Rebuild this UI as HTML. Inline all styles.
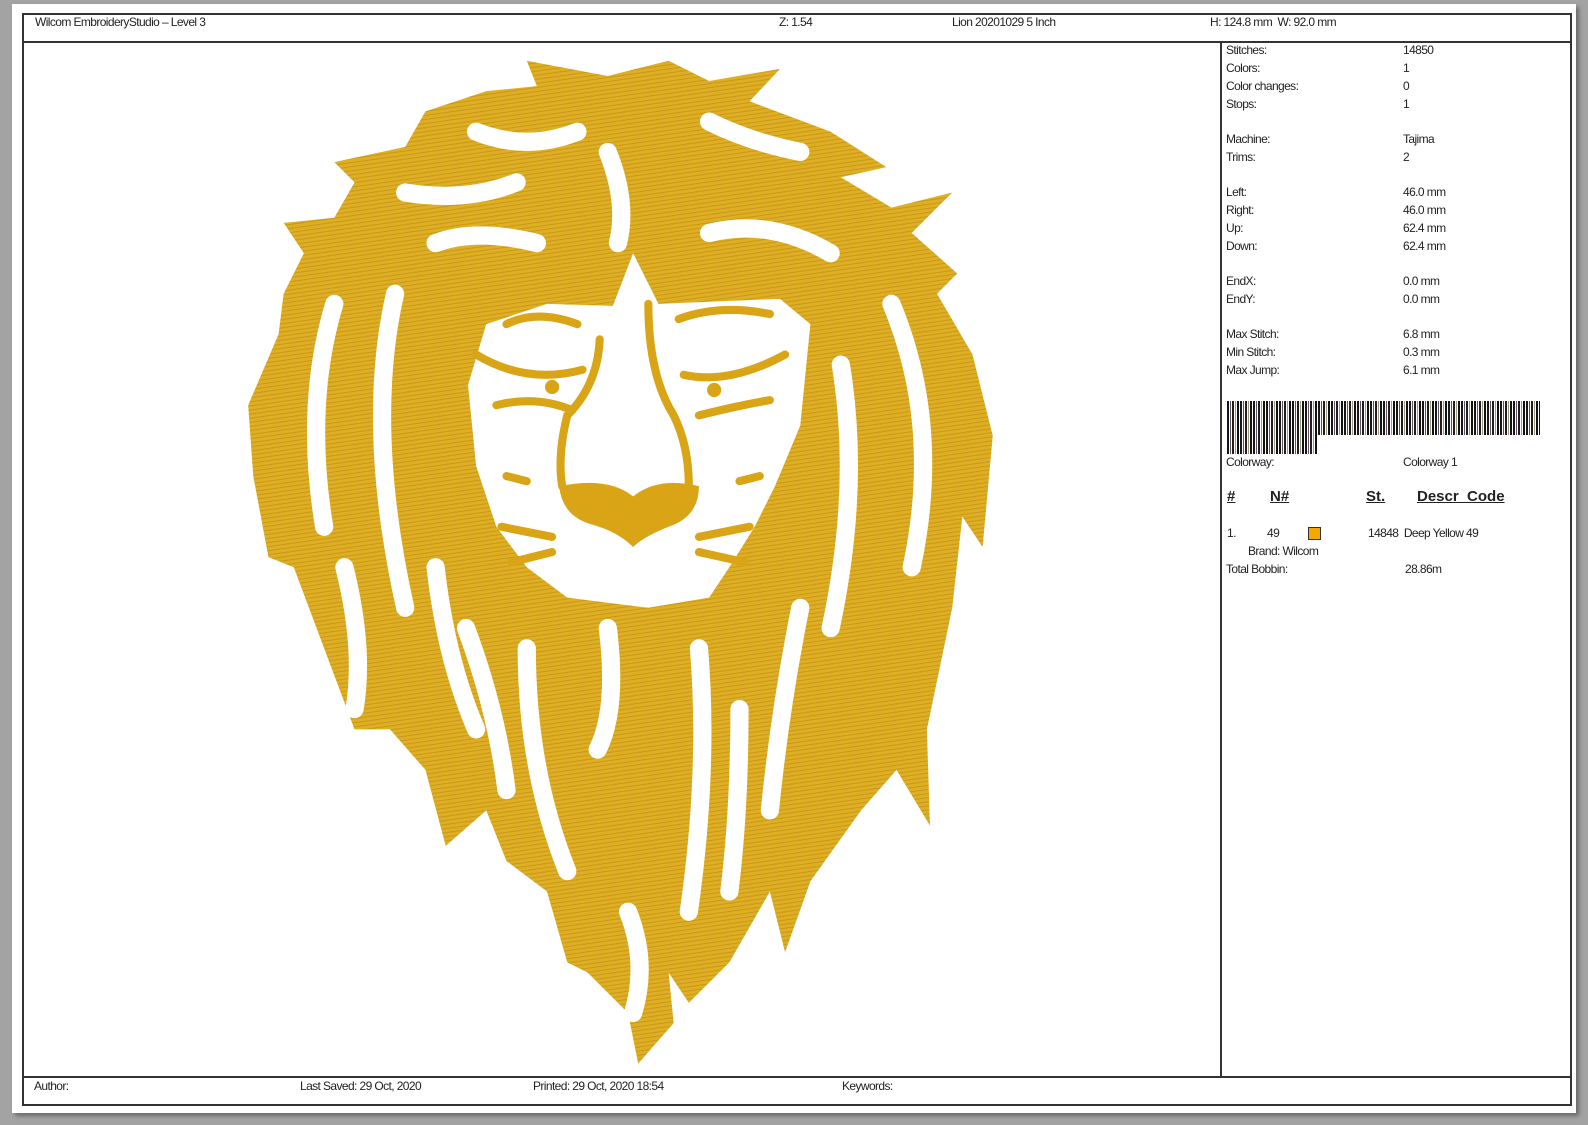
<!DOCTYPE html>
<html><head><meta charset="utf-8"><style>
*{margin:0;padding:0;box-sizing:border-box}
body{width:1588px;height:1125px;background:#a3a3a3;position:relative;overflow:hidden;font-family:"Liberation Sans",Arial,sans-serif;color:#222;font-size:12px;letter-spacing:-0.6px}
.paper{position:absolute;left:12px;top:4px;width:1564px;height:1109px;background:#fff;box-shadow:3px 3px 4px #6a6a6a}
.frame{position:absolute;left:22px;top:13px;width:1550px;height:1093px;border:2px solid #333}
.t{position:absolute;white-space:nowrap;line-height:14px}
.hl{position:absolute;background:#333}
u{text-decoration:underline}
</style></head><body>
<div class="paper"></div>
<div class="frame"></div>
<div class="hl" style="left:22px;top:41px;width:1550px;height:2px"></div>
<div class="hl" style="left:22px;top:1076px;width:1550px;height:2px"></div>
<div class="hl" style="left:1220px;top:41px;width:2px;height:1036px"></div>
<div class="t" style="left:35px;top:15px">Wilcom EmbroideryStudio – Level 3</div>
<div class="t" style="left:779px;top:15px">Z: 1.54</div>
<div class="t" style="left:952px;top:15px">Lion 20201029 5 Inch</div>
<div class="t" style="left:1210px;top:15px">H: 124.8 mm&nbsp;&nbsp;W: 92.0 mm</div>

<div class="t" style="left:34px;top:1079px">Author:</div>
<div class="t" style="left:300px;top:1079px">Last Saved: 29 Oct, 2020</div>
<div class="t" style="left:533px;top:1079px">Printed: 29 Oct, 2020 18:54</div>
<div class="t" style="left:842px;top:1079px">Keywords:</div>

<div style="position:absolute;left:1226px;top:43px;width:300px">
<div class="t" style="left:0;top:0">Stitches:</div><div class="t" style="left:177px;top:0">14850</div>
<div class="t" style="left:0;top:18px">Colors:</div><div class="t" style="left:177px;top:18px">1</div>
<div class="t" style="left:0;top:36px">Color changes:</div><div class="t" style="left:177px;top:36px">0</div>
<div class="t" style="left:0;top:54px">Stops:</div><div class="t" style="left:177px;top:54px">1</div>
<div class="t" style="left:0;top:89px">Machine:</div><div class="t" style="left:177px;top:89px">Tajima</div>
<div class="t" style="left:0;top:107px">Trims:</div><div class="t" style="left:177px;top:107px">2</div>
<div class="t" style="left:0;top:142px">Left:</div><div class="t" style="left:177px;top:142px">46.0 mm</div>
<div class="t" style="left:0;top:160px">Right:</div><div class="t" style="left:177px;top:160px">46.0 mm</div>
<div class="t" style="left:0;top:178px">Up:</div><div class="t" style="left:177px;top:178px">62.4 mm</div>
<div class="t" style="left:0;top:196px">Down:</div><div class="t" style="left:177px;top:196px">62.4 mm</div>
<div class="t" style="left:0;top:231px">EndX:</div><div class="t" style="left:177px;top:231px">0.0 mm</div>
<div class="t" style="left:0;top:249px">EndY:</div><div class="t" style="left:177px;top:249px">0.0 mm</div>
<div class="t" style="left:0;top:284px">Max Stitch:</div><div class="t" style="left:177px;top:284px">6.8 mm</div>
<div class="t" style="left:0;top:302px">Min Stitch:</div><div class="t" style="left:177px;top:302px">0.3 mm</div>
<div class="t" style="left:0;top:320px">Max Jump:</div><div class="t" style="left:177px;top:320px">6.1 mm</div>
</div>

<svg style="position:absolute;left:1227px;top:401px" width="315" height="54">
<defs><pattern id="bc" width="13" height="54" patternUnits="userSpaceOnUse">
<rect x="0" width="2" height="54" fill="#1a1414"/><rect x="3" width="1" height="54" fill="#556"/><rect x="5" width="2" height="54" fill="#2a1a1a"/><rect x="8" width="1" height="54" fill="#998"/><rect x="10" width="2" height="54" fill="#111"/></pattern></defs>
<rect x="0" y="0" width="313" height="34" fill="url(#bc)"/>
<rect x="0" y="34" width="91" height="19" fill="url(#bc)"/>
</svg>
<div class="t" style="left:1226px;top:455px">Colorway:</div>
<div class="t" style="left:1403px;top:455px">Colorway 1</div>
<div class="t" style="left:1227px;top:490px;font-size:15px;font-weight:bold;letter-spacing:0"><u>#</u></div>
<div class="t" style="left:1270px;top:490px;font-size:15px;font-weight:bold;letter-spacing:0"><u>N#</u></div>
<div class="t" style="left:1366px;top:490px;font-size:15px;font-weight:bold;letter-spacing:0"><u>St.</u></div>
<div class="t" style="left:1417px;top:490px;font-size:15px;font-weight:bold;letter-spacing:0"><u>Descr_Code</u></div>
<div class="t" style="left:1227px;top:526px">1.</div>
<div class="t" style="left:1267px;top:526px">49</div>
<div style="position:absolute;left:1308px;top:527px;width:13px;height:13px;background:#f5a800;border:1px solid #333"></div>
<div class="t" style="left:1368px;top:526px">14848&nbsp; Deep Yellow 49</div>
<div class="t" style="left:1248px;top:544px">Brand: Wilcom</div>
<div class="t" style="left:1226px;top:562px">Total Bobbin:</div>
<div class="t" style="left:1405px;top:562px">28.86m</div>

<svg style="position:absolute;left:0;top:0" width="1220" height="1076">
<defs><pattern id="st" width="6" height="4" patternUnits="userSpaceOnUse" patternTransform="rotate(-8)">
<rect width="6" height="4" fill="#e0ae22"/><rect y="2.8" width="6" height="0.9" fill="#c3961a"/></pattern></defs>
<g transform="scale(1.013)">
<path fill="url(#st)" d="M520,60 L600,75 L660,60 L700,80 L770,68 L740,100 L820,130 L875,165 L830,175 L880,205 L940,190 L900,230 L945,270 L925,290 L960,350 L980,430 L970,540 L950,510 L940,600 L915,720 L918,815 L885,760 L850,800 L800,870 L775,940 L760,880 L720,950 L680,990 L660,960 L665,1010 L630,1050 L620,1000 L580,960 L560,950 L540,880 L500,850 L480,800 L440,835 L420,760 L385,720 L350,720 L320,640 L290,560 L265,550 L250,470 L245,400 L275,330 L280,290 L300,250 L280,220 L330,215 L350,180 L330,160 L400,145 L420,110 L480,90 L530,85 Z"/>
<path fill="#fff" d="M480,320 L540,300 L605,302 L625,250 L650,300 L770,295 L800,320 L790,420 L765,480 L745,520 L720,560 L700,590 L640,600 L560,590 L520,560 L490,520 L470,460 L462,380 Z"/>
<g fill="none" stroke="#fff" stroke-width="18" stroke-linecap="round">
<path d="M470,130 Q520,150 570,130"/><path d="M400,190 Q460,200 510,180"/><path d="M700,120 Q740,140 790,150"/>
<path d="M430,240 Q470,225 530,240"/><path d="M700,230 Q760,215 820,250"/><path d="M600,150 Q620,200 610,240"/>
<path d="M330,300 Q300,400 320,520"/><path d="M390,290 Q360,420 400,600"/><path d="M430,560 Q440,650 470,720"/>
<path d="M880,300 Q930,420 900,560"/><path d="M830,360 Q850,480 820,620"/><path d="M790,600 Q770,700 760,800"/>
<path d="M520,640 Q520,760 560,860"/><path d="M600,620 Q610,700 590,740"/><path d="M690,640 Q700,760 680,900"/>
<path d="M620,900 Q640,950 625,1000"/><path d="M340,560 Q360,640 350,700"/>
<path d="M730,700 Q730,800 720,880"/><path d="M460,620 Q490,700 500,780"/>
</g>
<g fill="none" stroke="#d9a517" stroke-width="8" stroke-linecap="round">
<path d="M470,350 Q520,380 575,365"/><path d="M490,400 Q530,390 565,405"/>
<path d="M775,350 Q720,380 675,370"/><path d="M690,410 Q730,400 760,395"/>
<path d="M592,335 Q590,380 560,410 Q550,450 555,480"/>
<path d="M640,300 Q640,370 665,410 Q680,440 680,480"/>
<path d="M500,470 L520,475"/><path d="M495,520 L545,530"/><path d="M505,555 L545,545"/>
<path d="M750,470 L730,475"/><path d="M740,520 L690,530"/><path d="M735,555 L690,545"/>
<path d="M500,320 Q530,305 570,320"/><path d="M670,315 Q710,300 760,310"/>
</g>
<path fill="#d9a517" d="M552,480 Q600,470 625,490 Q650,470 690,480 Q690,510 660,520 Q635,530 625,540 Q610,525 585,518 Q555,510 552,480 Z"/>
<circle cx="545" cy="382" r="7" fill="#d9a517"/><circle cx="705" cy="385" r="7" fill="#d9a517"/>
</g>
</svg>
</body></html>
